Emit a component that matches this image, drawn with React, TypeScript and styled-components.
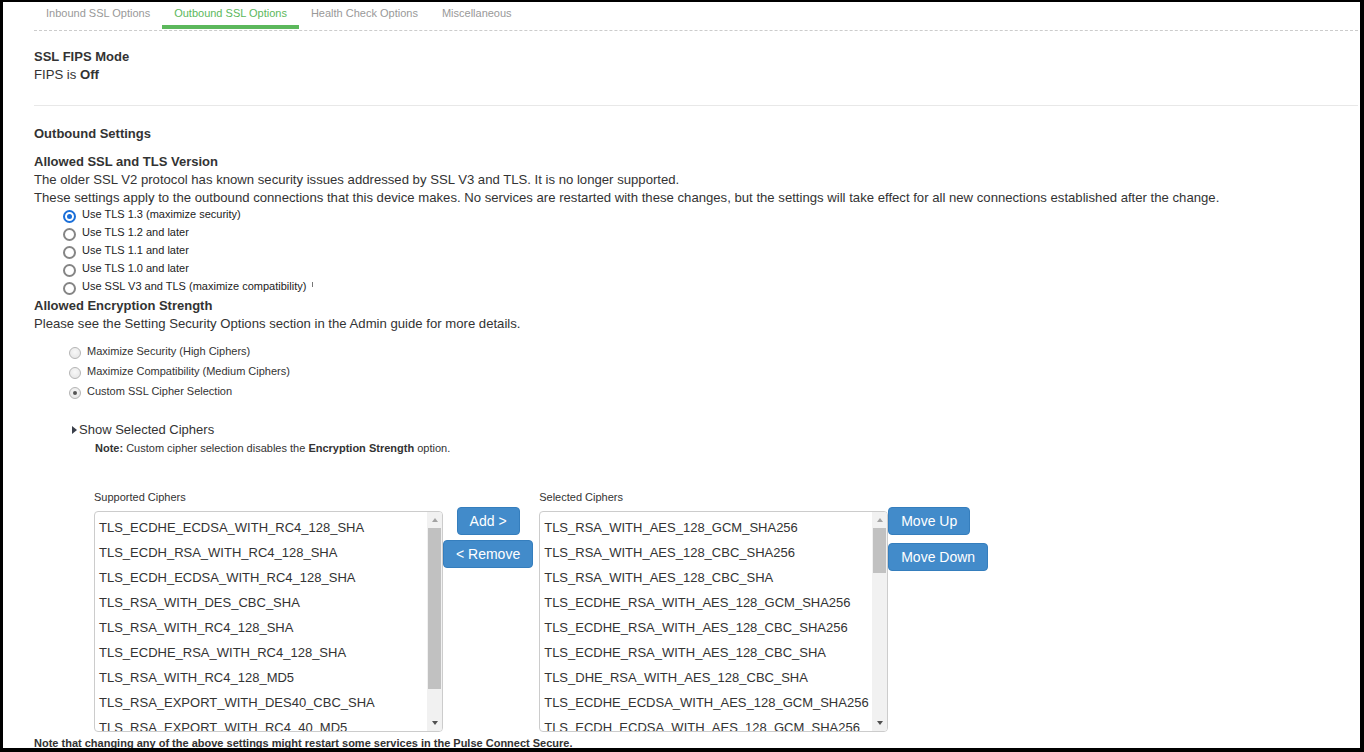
import styled, { createGlobalStyle } from "styled-components";

const GlobalStyle = createGlobalStyle`
  html, body {
    margin: 0;
    padding: 0;
    height: 752px;
    overflow: hidden;
    background: #000;
  }
  body {
    font-family: "Liberation Sans", Arial, sans-serif;
    color: #333;
  }
`;

const Frame = styled.div`
  margin: 2px 4px 0 3px;
  height: 746px;
  padding: 0 2px 0 31px;
  background: #fff;
  overflow: hidden;
`;

const TabBar = styled.div`
  display: flex;
  border-bottom: 1px dashed #ccc;
`;

const Tab = styled.div<{ $active?: boolean }>`
  padding: 5px 12px;
  margin-bottom: 1px;
  font-size: 11px;
  line-height: 13px;
  color: ${(p) => (p.$active ? "#5cb85c" : "#999")};
  border-bottom: 4px solid ${(p) => (p.$active ? "#5cb85c" : "transparent")};
  cursor: pointer;
`;

const Heading = styled.div<{ $mt?: number }>`
  margin-top: ${(p) => p.$mt ?? 0}px;
  font-size: 13px;
  font-weight: bold;
  line-height: 18px;
  color: #333;
`;

const Text = styled.div`
  font-size: 13.15px;
  line-height: 18px;
  white-space: nowrap;
`;

const Divider = styled.hr`
  margin: 21px 0 0;
  border: 0;
  border-top: 1px solid #e8e8e8;
`;

const VersionList = styled.div`
  padding-left: 29px;
`;

const VersionRow = styled.label`
  display: flex;
  align-items: center;
  height: 18px;
  gap: 6px;
  font-size: 11px;
  cursor: pointer;
`;

const VersionLabel = styled.span`
  line-height: 13px;
  padding-bottom: 4px;
  color: #222;
`;

const VersionRadio = styled.span<{ $checked?: boolean }>`
  box-sizing: border-box;
  width: 13px;
  height: 13px;
  border-radius: 50%;
  border: 2px solid ${(p) => (p.$checked ? "#1a6fd9" : "#858585")};
  display: flex;
  align-items: center;
  justify-content: center;
  background: #fff;
  &::after {
    content: "";
    width: 5px;
    height: 5px;
    border-radius: 50%;
    background: ${(p) => (p.$checked ? "#1a6fd9" : "transparent")};
  }
`;

const TipMark = styled.span`
  width: 1px;
  height: 5px;
  margin: 0 0 8px 0;
  background: #777;
`;

const StrengthList = styled.div`
  margin-top: 8px;
  padding-left: 35px;
`;

const StrengthRow = styled.label`
  display: flex;
  align-items: center;
  height: 20px;
  gap: 6px;
  font-size: 11px;
  line-height: 13px;
  color: #333;
`;

const StrengthRadio = styled.span<{ $checked?: boolean }>`
  box-sizing: border-box;
  width: 12px;
  height: 12px;
  margin-top: 3px;
  border-radius: 50%;
  border: 1px solid #b4b4b4;
  background: radial-gradient(circle at 50% 40%, #f8f8f8 0%, #e2e2e2 100%);
  display: flex;
  align-items: center;
  justify-content: center;
  &::after {
    content: "";
    width: 4px;
    height: 4px;
    border-radius: 50%;
    background: ${(p) => (p.$checked ? "#555" : "transparent")};
  }
`;

const Toggle = styled.div`
  display: flex;
  align-items: center;
  margin: 20px 0 0 38px;
  font-size: 13px;
  line-height: 18px;
  color: #333;
  cursor: pointer;
`;

const Caret = styled.span`
  width: 0;
  height: 0;
  margin-right: 2px;
  border-left: 5px solid #3a3f4a;
  border-top: 4px solid transparent;
  border-bottom: 4px solid transparent;
`;

const Note = styled.div`
  margin: 2px 0 0 61px;
  font-size: 11px;
  line-height: 14px;
  color: #333;
`;

const CipherRow = styled.div`
  display: flex;
  align-items: flex-start;
  margin: 35px 0 0 60px;
`;

const CipherGroup = styled.div`
  display: flex;
  flex-direction: column;
`;

const GroupLabel = styled.div`
  margin-bottom: 7px;
  font-size: 11px;
  line-height: 14px;
  color: #333;
`;

const ListBox = styled.div`
  box-sizing: border-box;
  width: 349px;
  height: 221px;
  display: flex;
  border: 1px solid #ccc;
  border-radius: 4px;
  background: #fff;
  overflow: hidden;
`;

const Items = styled.div`
  flex: 1;
  padding: 3px 0 0 4px;
  overflow: hidden;
`;

const Item = styled.div`
  font-size: 13px;
  line-height: 25px;
  white-space: nowrap;
  color: #333;
`;

const Track = styled.div`
  width: 15px;
  display: flex;
  flex-direction: column;
  background: #f1f1f1;
`;

const Arrow = styled.div<{ $down?: boolean }>`
  height: 16px;
  display: flex;
  align-items: center;
  justify-content: center;
  &::before {
    content: "";
    border-left: 3.5px solid transparent;
    border-right: 3.5px solid transparent;
    ${(p) =>
      p.$down
        ? "border-top: 4px solid #505050;"
        : "border-bottom: 4px solid #a3a3a3;"}
  }
`;

const Thumb = styled.div<{ $h: number }>`
  height: ${(p) => p.$h}px;
  margin: 0 1px;
  background: #c1c1c1;
`;

const TrackRest = styled.div`
  flex: 1;
`;

const TransferCol = styled.div`
  display: flex;
  flex-direction: column;
  align-items: center;
  gap: 5px;
  margin: 17px 6px 0 0;
`;

const OrderCol = styled.div`
  display: flex;
  flex-direction: column;
  align-items: flex-start;
  gap: 8px;
  margin-top: 17px;
`;

const Button = styled.button`
  font-family: inherit;
  font-size: 14px;
  line-height: 20px;
  padding: 3px 12px;
  color: #fff;
  background: #428bca;
  border: 1px solid #357ebd;
  border-radius: 4px;
  white-space: nowrap;
  cursor: pointer;
`;

const FootNote = styled.div`
  margin-top: 4px;
  font-size: 11px;
  font-weight: bold;
  line-height: 14px;
  color: #333;
  white-space: nowrap;
`;

const tabs = ["Inbound SSL Options", "Outbound SSL Options", "Health Check Options", "Miscellaneous"];

const versions = [
  "Use TLS 1.3 (maximize security)",
  "Use TLS 1.2 and later",
  "Use TLS 1.1 and later",
  "Use TLS 1.0 and later",
  "Use SSL V3 and TLS (maximize compatibility)",
];

const strengths = [
  "Maximize Security (High Ciphers)",
  "Maximize Compatibility (Medium Ciphers)",
  "Custom SSL Cipher Selection",
];

const supported = [
  "TLS_ECDHE_ECDSA_WITH_RC4_128_SHA",
  "TLS_ECDH_RSA_WITH_RC4_128_SHA",
  "TLS_ECDH_ECDSA_WITH_RC4_128_SHA",
  "TLS_RSA_WITH_DES_CBC_SHA",
  "TLS_RSA_WITH_RC4_128_SHA",
  "TLS_ECDHE_RSA_WITH_RC4_128_SHA",
  "TLS_RSA_WITH_RC4_128_MD5",
  "TLS_RSA_EXPORT_WITH_DES40_CBC_SHA",
  "TLS_RSA_EXPORT_WITH_RC4_40_MD5",
  "TLS_DHE_RSA_WITH_DES_CBC_SHA",
];

const selected = [
  "TLS_RSA_WITH_AES_128_GCM_SHA256",
  "TLS_RSA_WITH_AES_128_CBC_SHA256",
  "TLS_RSA_WITH_AES_128_CBC_SHA",
  "TLS_ECDHE_RSA_WITH_AES_128_GCM_SHA256",
  "TLS_ECDHE_RSA_WITH_AES_128_CBC_SHA256",
  "TLS_ECDHE_RSA_WITH_AES_128_CBC_SHA",
  "TLS_DHE_RSA_WITH_AES_128_CBC_SHA",
  "TLS_ECDHE_ECDSA_WITH_AES_128_GCM_SHA256",
  "TLS_ECDH_ECDSA_WITH_AES_128_GCM_SHA256",
  "TLS_ECDH_RSA_WITH_AES_128_GCM_SHA256",
];

const CipherList = ({ items, thumb }: { items: string[]; thumb: number }) => (
  <ListBox>
    <Items>
      {items.map((c) => (
        <Item key={c}>{c}</Item>
      ))}
    </Items>
    <Track>
      <Arrow />
      <Thumb $h={thumb} />
      <TrackRest />
      <Arrow $down />
    </Track>
  </ListBox>
);

const App = () => {
  return (
    <>
      <GlobalStyle />
      <Frame>
        <TabBar>
          {tabs.map((t) => (
            <Tab key={t} $active={t === "Outbound SSL Options"}>
              {t}
            </Tab>
          ))}
        </TabBar>

        <Heading $mt={17}>SSL FIPS Mode</Heading>
        <Text>
          FIPS is <b>Off</b>
        </Text>
        <Divider />

        <Heading $mt={19}>Outbound Settings</Heading>
        <Heading $mt={10}>Allowed SSL and TLS Version</Heading>
        <Text>The older SSL V2 protocol has known security issues addressed by SSL V3 and TLS. It is no longer supported.</Text>
        <Text>
          These settings apply to the outbound connections that this device makes. No services are restarted with these
          changes, but the settings will take effect for all new connections established after the change.
        </Text>
        <VersionList>
          {versions.map((v, i) => (
            <VersionRow key={v}>
              <VersionRadio $checked={i === 0} />
              <VersionLabel>{v}</VersionLabel>
              {i === versions.length - 1 && <TipMark />}
            </VersionRow>
          ))}
        </VersionList>

        <Heading>Allowed Encryption Strength</Heading>
        <Text>Please see the Setting Security Options section in the Admin guide for more details.</Text>
        <StrengthList>
          {strengths.map((s, i) => (
            <StrengthRow key={s}>
              <StrengthRadio $checked={i === 2} />
              {s}
            </StrengthRow>
          ))}
        </StrengthList>

        <Toggle>
          <Caret />
          Show Selected Ciphers
        </Toggle>
        <Note>
          <b>Note:</b> Custom cipher selection disables the <b>Encryption Strength</b> option.
        </Note>

        <CipherRow>
          <CipherGroup>
            <GroupLabel>Supported Ciphers</GroupLabel>
            <CipherList items={supported} thumb={161} />
          </CipherGroup>
          <TransferCol>
            <Button>Add &gt;</Button>
            <Button>&lt; Remove</Button>
          </TransferCol>
          <CipherGroup>
            <GroupLabel>Selected Ciphers</GroupLabel>
            <CipherList items={selected} thumb={45} />
          </CipherGroup>
          <OrderCol>
            <Button>Move Up</Button>
            <Button>Move Down</Button>
          </OrderCol>
        </CipherRow>

        <FootNote>Note that changing any of the above settings might restart some services in the Pulse Connect Secure.</FootNote>
      </Frame>
    </>
  );
};

export default App;
